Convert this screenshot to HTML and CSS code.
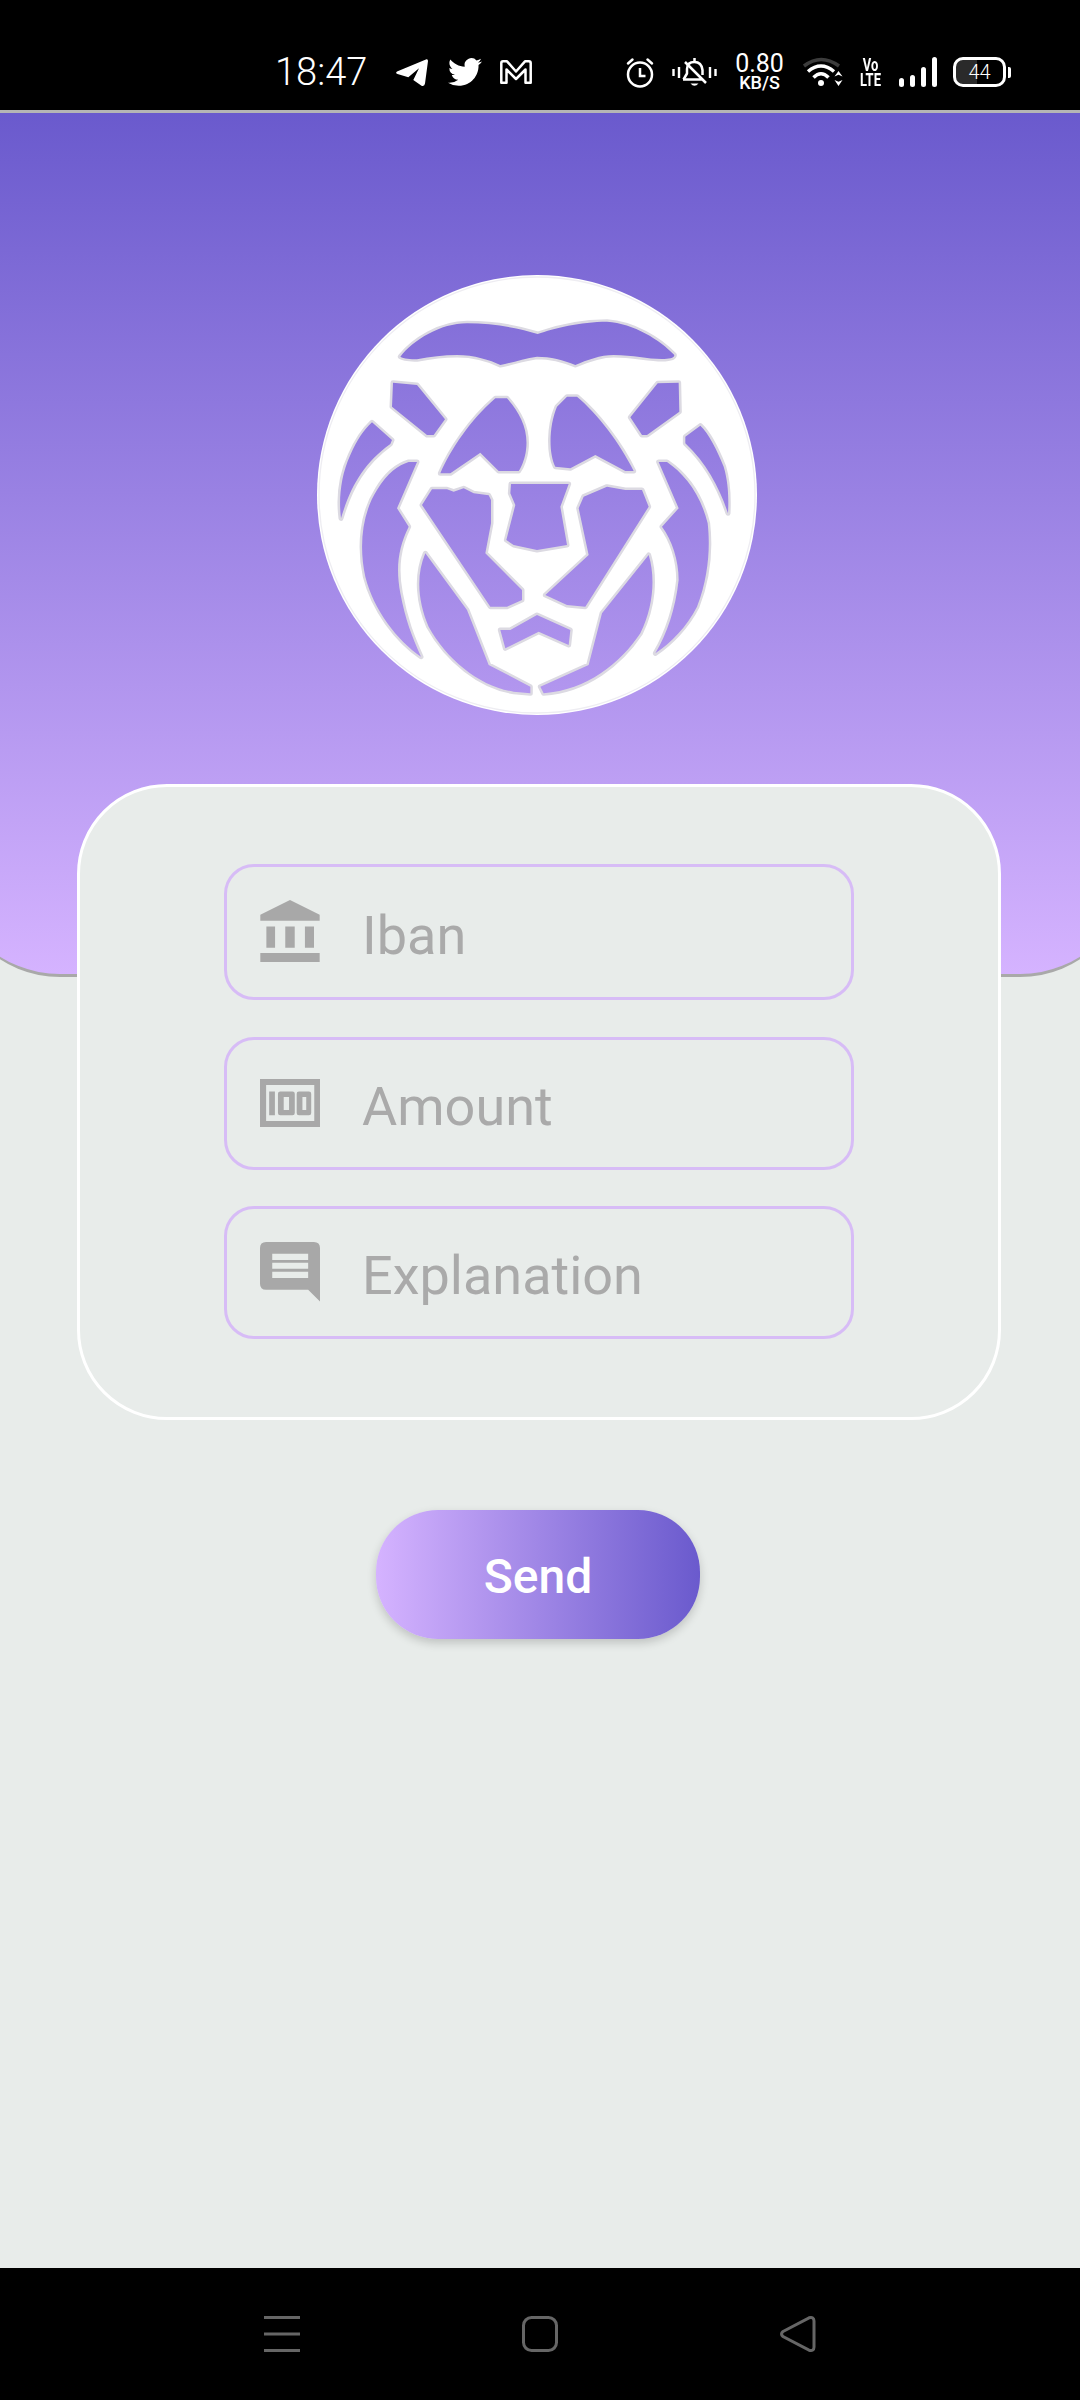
FILE: index.html
```html
<!DOCTYPE html>
<html lang="en">
<head>
<meta charset="utf-8">
<title>Send</title>
<link rel="stylesheet" href="styles.css">
</head>
<body>
<div class="screen">
  <header class="status">
    <div class="status-left">
      <span class="time">18:47</span>
      <svg class="ic-telegram" viewBox="0 0 32 27"><path d="M30.500 0.300 1 12.500Q-1 14 1.500 15L12.300 18.300 23 9.300 17.300 21 25.500 26.700Q28.500 27.800 29 24.500L32 2Q32 0 30.500 0.300Z" fill="#fff"/></svg>
      <svg class="ic-twitter" viewBox="0 0 24 24"><path fill="#fff" d="M23.953 4.57a10 10 0 01-2.825.775 4.958 4.958 0 002.163-2.723c-.951.555-2.005.959-3.127 1.184a4.92 4.92 0 00-8.384 4.482C7.69 8.095 4.067 6.13 1.64 3.162a4.822 4.822 0 00-.666 2.475c0 1.71.87 3.213 2.188 4.096a4.904 4.904 0 01-2.228-.616v.06a4.923 4.923 0 003.946 4.827 4.996 4.996 0 01-2.212.085 4.936 4.936 0 004.604 3.417 9.867 9.867 0 01-6.102 2.105c-.39 0-.779-.023-1.17-.067a13.995 13.995 0 007.557 2.209c9.053 0 13.998-7.496 13.998-13.985 0-.21 0-.42-.015-.63A9.935 9.935 0 0024 4.59z"/></svg>
      <svg class="ic-gmail" viewBox="0 0 32 24"><path d="M3 1.300H7L16 11.500 25 1.300H29Q30.700 1.300 30.700 3V22.700H25.500V9.500L16 19 6.500 9.500V22.700H1.300V3Q1.300 1.300 3 1.300Z" fill="none" stroke="#fff" stroke-width="2.500" stroke-linejoin="round"/></svg>
    </div>
    <div class="status-right">
      <svg class="ic-alarm" viewBox="0 0 30 31"><circle cx="15" cy="17.500" r="12" fill="none" stroke="#fff" stroke-width="2.500"/><path d="M15 11V19H20.500" fill="none" stroke="#fff" stroke-width="2.500"/><path d="M3 6.500 7.500 2.500M27 6.500 22.500 2.500" stroke="#fff" stroke-width="2.500" stroke-linecap="round"/></svg>
      <svg class="ic-bell" viewBox="0 0 45 30"><path d="M22.500 1V4M11.500 22.500 15 16.500V12Q15 5 22.500 5 29.500 5 30.500 13V18" fill="none" stroke="#fff" stroke-width="2.500" stroke-linejoin="round"/><path d="M11 22.500H30M13 5 34 26" stroke="#fff" stroke-width="2.500"/><path d="M18.500 26.500H26.500Q22.500 31 18.500 26.500Z" fill="#fff"/><path d="M1.500 12V19M7 10V21M38 10V21M43.500 12V19" stroke="#fff" stroke-width="2.400"/></svg>
      <div class="speed"><span class="speed-num">0.80</span><span class="speed-unit">KB/S</span></div>
      <svg class="ic-wifi" viewBox="0 0 40 30"><path d="M1 9Q18 -4 36 9" fill="none" stroke="#3c3c3c" stroke-width="3.500"/><path d="M5 14.500Q18 3.500 31 14.500M10.500 20.500Q18 13 25.500 20.500" fill="none" stroke="#fff" stroke-width="3.500"/><circle cx="18" cy="26" r="3" fill="#fff"/><path d="M31.500 19.500 35.500 14 39.500 19.500 35.500 17.800ZM31.500 23 35.500 24.800 39.500 23 35.500 29Z" fill="#fff"/></svg>
      <div class="volte"><span>Vo</span><span>LTE</span></div>
      <div class="signal"><i class="bar bar-1"></i><i class="bar bar-2"></i><i class="bar bar-3"></i><i class="bar bar-4"></i></div>
      <div class="battery"><div class="battery-body"><span>44</span></div><i class="battery-nub"></i></div>
    </div>
  </header>

  <section class="hero">
    <svg class="logo" viewBox="50 45 1320 1320">
      <defs>
        <path id="holes" d="M300 290C340 240 420 190 500 190C580 190 660 205 712 222C760 205 840 185 920 185C1000 190 1080 240 1122 285C1122 295 1105 297 1085 297C1040 297 1000 285 940 285C900 285 860 300 825 315C790 300 750 290 710 290C670 295 630 310 600 315C570 300 520 285 470 285C430 285 390 290 350 298C330 297 310 297 300 290Z
        M278 368L350 375L434 478L400 525L380 525L275 440Z
        M1072 370L1135 368L1137 455L1040 525L1025 525L990 472Z
        M215 487L275 540L270 552C190 610 150 680 122 775C115 720 120 650 150 585C170 540 190 510 215 487Z
        M1200 497C1225 520 1250 570 1270 620C1285 670 1285 720 1283 760C1260 690 1220 610 1155 550L1155 530Z
        M325 606L350 606L290 745L325 800C295 860 285 920 300 1000C315 1080 335 1130 362 1190C290 1140 220 1050 195 950C175 860 185 760 230 690C260 640 295 615 325 606Z
        M1075 606L1100 606C1150 640 1200 700 1222 790C1230 860 1225 950 1190 1040C1160 1100 1110 1150 1065 1180C1100 1120 1125 1050 1135 960C1135 900 1115 840 1085 800L1135 745Z
        M585 415L620 415C660 460 685 510 677 570C675 590 665 620 655 633L595 633L540 578L450 640L420 640C450 570 510 480 585 415Z
        M800 410L830 410C890 460 960 550 1000 633L975 633L885 585L810 625L765 620C745 580 745 500 770 440Z
        M395 688L440 688L460 695L490 685L520 700L565 706L572 720L572 790L555 880L665 990L665 1020L620 1040L570 1040L365 735Z
        M1025 690L1045 740L855 1040L800 1035L735 1005L865 885L835 745L850 710L920 680L975 690Z
        M632 672L805 672L780 740L800 855L710 870L640 855L618 840L645 735L630 700Z
        M375 880L500 1050L565 1215L690 1280L690 1300L640 1295C540 1280 440 1200 385 1100C355 1030 345 950 375 880Z
        M1045 885C1065 950 1060 1040 1020 1120C960 1210 860 1290 730 1300L720 1280L865 1215L905 1060Z
        M600 1110L630 1110L710 1065L810 1110L805 1155L715 1115L615 1165Z"/>
        <mask id="cut" maskUnits="userSpaceOnUse" x="0" y="0" width="1440" height="1410">
          <rect width="1440" height="1410" fill="#fff"/>
          <use href="#holes" fill="#000"/>
        </mask>
      </defs>
      <g mask="url(#cut)">
        <circle cx="710" cy="705" r="660" fill="#fff"/>
        <circle cx="710" cy="705" r="654" fill="none" stroke="#eeedf2" stroke-width="4"/>
        <use href="#holes" fill="none" stroke="#dcdae2" stroke-width="15" stroke-linejoin="round"/>
      </g>
    </svg>
  </section>

  <main class="main">
    <div class="card">
      <div class="field field-first">
        <svg class="field-icon" viewBox="679 363 157 164"><path fill="#a8a8a8" d="M757.500 363 836 402V418H679V402ZM695 433H718V489H695ZM745 433H770V489H745ZM797 433H821V489H797ZM679 503H836V527H679Z"/></svg>
        <span class="field-label">Iban</span>
      </div>
      <div class="field">
        <svg class="field-icon" viewBox="679 833 157 126"><path fill="#a8a8a8" fill-rule="evenodd" d="M679 833H836V959H679ZM695 849V943H821V849ZM703 866H718V928H703ZM732 866H764Q770 866 770 872V922Q770 928 764 928H732Q726 928 726 922V872Q726 866 732 866ZM741 880V914H755V880ZM781 866H807Q813 866 813 872V922Q813 928 807 928H781Q775 928 775 922V872Q775 866 781 866ZM790 880V914H800V880Z"/></svg>
        <span class="field-label">Amount</span>
      </div>
      <div class="field">
        <svg class="field-icon" viewBox="679 1260 157 157"><path fill="#a8a8a8" fill-rule="evenodd" d="M695 1260H820Q836 1260 836 1276V1416L805 1385H695Q679 1385 679 1369V1276Q679 1260 695 1260ZM711 1291V1307H805V1291ZM711 1314V1330H805V1314ZM711 1338V1354H805V1338Z"/></svg>
        <span class="field-label">Explanation</span>
      </div>
    </div>
    <button class="send" type="button">Send</button>
  </main>

  <nav class="navbar">
    <svg viewBox="0 0 36 36"><path d="M0 1.500H36M0 18H36M0 34.500H36" stroke="#666" stroke-width="3"/></svg>
    <svg viewBox="0 0 36 36"><rect x="1.500" y="1.500" width="33" height="33" rx="8" fill="none" stroke="#666" stroke-width="3"/></svg>
    <svg viewBox="0 0 36 36"><path d="M3 15.500 29 1.800Q34 .5 34 5V31Q34 35.500 29 34.200L3 20.500Q0 18 3 15.500Z" fill="none" stroke="#666" stroke-width="3"/></svg>
  </nav>
</div>
</body>
</html>
```

FILE: styles.css
```css
* { box-sizing: border-box; }
html, body { margin: 0; padding: 0; }
body { font-family: Roboto, "Liberation Sans", sans-serif; background: #e8ecea; }

.screen {
  width: 1080px;
  height: 2400px;
  display: flex;
  flex-direction: column;
  overflow: hidden;
  background: #e8ecea;
}

/* status bar */
.status {
  flex: none;
  height: 113px;
  padding: 34px 69px 0 275px;
  background: #000;
  border-bottom: 3px solid #b5b5b5;
  display: flex;
  align-items: center;
  justify-content: space-between;
  color: #fff;
}
.status-left, .status-right { display: flex; align-items: center; }
.status-right { gap: 16.5px; }
.time { font-size: 38px; font-weight: 300; width: 91px; white-space: nowrap; }
.ic-telegram { width: 32px; height: 27px; margin-left: 30px; }
.ic-twitter { width: 34px; height: 34px; margin-left: 20px; }
.ic-gmail { width: 32px; height: 24px; margin-left: 18px; }
.ic-alarm { width: 30px; height: 31px; }
.ic-bell { width: 45px; height: 30px; }
.speed { width: 53px; display: flex; flex-direction: column; align-items: center; line-height: 1; }
.speed-num { font-size: 25px; height: 20px; line-height: 20px; }
.speed-unit { font-size: 18px; height: 17px; line-height: 17px; font-weight: 500; }
.ic-wifi { width: 40px; height: 30px; }
.volte {
  width: 23px;
  display: flex;
  flex-direction: column;
  align-items: center;
  font-size: 18px;
  font-weight: 700;
  line-height: 15px;
  transform: scaleX(.72);
}
.signal { width: 38px; height: 30px; display: flex; align-items: flex-end; justify-content: space-between; }
.bar { display: block; width: 5px; background: #fff; border-radius: 2.5px; }
.bar-1 { height: 9px; }
.bar-2 { height: 12px; }
.bar-3 { height: 20px; }
.bar-4 { height: 30px; }
.battery { display: flex; align-items: center; width: 58px; }
.battery-body {
  width: 53px;
  height: 30px;
  border: 3px solid #fff;
  border-radius: 10px;
  background: linear-gradient(90deg, #2a2a2a 44%, #000 44%);
  display: flex;
  align-items: center;
  justify-content: center;
  font-size: 20px;
  font-weight: 300;
}
.battery-nub { display: block; width: 3px; height: 11px; margin-left: 2px; background: #fff; border-radius: 0 2px 2px 0; }

/* hero */
.hero {
  flex: none;
  width: 1180px;
  height: 864px;
  margin-left: -50px;
  padding: 162px 0 0 367px;
  background: linear-gradient(180deg, #6a5acd 0%, #d5b3ff 100%);
  border-bottom: 3px solid #a9a9a9;
  border-radius: 0 0 110px 110px;
}
.logo { display: block; width: 440px; height: 440px; }

/* form */
.main {
  flex: 1;
  margin-top: -193px;
  position: relative;
  display: flex;
  flex-direction: column;
}
.card {
  flex: none;
  width: 924px;
  height: 636px;
  margin-left: 77px;
  padding: 77px 0 0 144px;
  background: #e8ecea;
  border: 3px solid #fff;
  border-radius: 90px;
  display: flex;
  flex-direction: column;
  gap: 36px;
}
.field {
  width: 630px;
  height: 133px;
  padding-left: 33px;
  border: 3px solid #d7bcf6;
  border-radius: 30px;
  display: flex;
  align-items: center;
  gap: 42px;
}
.field-first { height: 136px; margin-bottom: 1px; }
.field-icon { flex: none; width: 60px; height: 62px; margin-top: -2px; }
.field-first .field-icon { margin-top: -3px; }
.field-label { font-size: 54px; line-height: 1; color: #aaa; padding-top: 6px; }
.field-first .field-label { padding-top: 8px; }

.send {
  flex: none;
  width: 324px;
  height: 129px;
  margin: 90px 0 0 376px;
  padding: 3px 0 0;
  border: 0;
  border-radius: 62px;
  background: linear-gradient(90deg, #d5b3ff 0%, #6a5acd 100%);
  box-shadow: 0 4px 10px rgba(0, 0, 0, .18);
  color: #fff;
  font-family: Roboto, "Liberation Sans", sans-serif;
  font-size: 48px;
  font-weight: 500;
}

/* navigation */
.navbar {
  flex: none;
  height: 132px;
  padding-left: 264px;
  background: #000;
  display: flex;
  align-items: center;
  gap: 222px;
}
.navbar svg { display: block; width: 36px; height: 36px; }
```
